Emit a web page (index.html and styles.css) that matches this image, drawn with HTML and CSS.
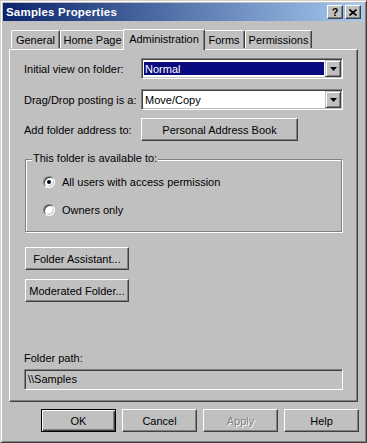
FILE: index.html
```html
<!DOCTYPE html>
<html lang="en">
<head>
  <meta charset="UTF-8">
  <title>Samples Properties</title>
  <link rel="stylesheet" href="styles.css">
</head>
<body>
  <div class="window">
    <div class="titlebar">
      <span class="title">Samples Properties</span>
      <div class="title-buttons">
        <span class="tbtn help">?</span>
        <span class="tbtn close">
          <svg width="8" height="7" viewBox="0 0 8 7"><path d="M0.5 0.5 L7.5 6.5 M7.5 0.5 L0.5 6.5" stroke="#000" stroke-width="1.6"/></svg>
        </span>
      </div>
    </div>

    <div class="tabs">
      <div class="tab tab-general">General</div>
      <div class="tab tab-home">Home Page</div>
      <div class="tab tab-admin active">Administration</div>
      <div class="tab tab-forms">Forms</div>
      <div class="tab tab-perm">Permissions</div>
    </div>

    <div class="panel">
      <div class="row row-view">
        <span class="row-label">Initial view on folder:</span>
        <div class="combo">
          <span class="combo-text highlight">Normal</span>
          <span class="drop"><svg width="7" height="4" viewBox="0 0 7 4"><polygon points="0,0 7,0 3.5,4" fill="#000"/></svg></span>
        </div>
      </div>

      <div class="row row-drag">
        <span class="row-label">Drag/Drop posting is a:</span>
        <div class="combo">
          <span class="combo-text">Move/Copy</span>
          <span class="drop"><svg width="7" height="4" viewBox="0 0 7 4"><polygon points="0,0 7,0 3.5,4" fill="#000"/></svg></span>
        </div>
      </div>

      <div class="row row-address">
        <span class="row-label">Add folder address to:</span>
        <button class="btn btn-address">Personal Address Book</button>
      </div>

      <div class="group">
        <span class="group-label">This folder is available to:</span>
        <div class="radio-row">
          <span class="radio checked"></span>
          <span>All users with access permission</span>
        </div>
        <div class="radio-row">
          <span class="radio"></span>
          <span>Owners only</span>
        </div>
      </div>

      <button class="btn btn-side btn-assistant">Folder Assistant...</button>
      <button class="btn btn-side btn-moderated">Moderated Folder...</button>

      <div class="path">
        <div class="path-label">Folder path:</div>
        <div class="path-field">\\Samples</div>
      </div>
    </div>

    <div class="buttons">
      <button class="btn btn-bottom default">OK</button>
      <button class="btn btn-bottom">Cancel</button>
      <button class="btn btn-bottom disabled">Apply</button>
      <button class="btn btn-bottom">Help</button>
    </div>
  </div>
</body>
</html>
```

FILE: styles.css
```css
body {
  margin: 0;
  background: #c0c0c0;
  font-family: "Liberation Sans", Arial, sans-serif;
  font-size: 11px;
  color: #000;
}

.window {
  width: 367px;
  height: 443px;
  box-sizing: border-box;
  padding: 2px;
  background: #c0c0c0;
  border: 1px solid;
  border-color: #d4d0c8 #404040 #404040 #d4d0c8;
  box-shadow: inset 1px 1px 0 #fff, inset -1px -1px 0 #808080;
}

.titlebar {
  height: 18px;
  display: flex;
  align-items: center;
  justify-content: space-between;
  padding-left: 3px;
  background: linear-gradient(to right, #0a246a, #a6caf0);
}

.title {
  color: #fff;
  font-weight: bold;
  font-size: 11.5px;
  letter-spacing: 0.2px;
}

.title-buttons {
  display: flex;
  gap: 2px;
  margin-right: 3px;
}

.tbtn {
  width: 16px;
  height: 14px;
  box-sizing: border-box;
  display: flex;
  align-items: center;
  justify-content: center;
  background: #c0c0c0;
  border: 1px solid;
  border-color: #fff #404040 #404040 #fff;
  box-shadow: inset -1px -1px 0 #808080;
  font-weight: bold;
  font-size: 11px;
  line-height: 1;
}

.tabs {
  display: flex;
  align-items: flex-end;
  height: 20px;
  margin-top: 8px;
  padding-left: 8px;
  position: relative;
  z-index: 1;
}

.tab {
  height: 18px;
  box-sizing: border-box;
  display: flex;
  align-items: center;
  justify-content: center;
  background: #c0c0c0;
  border-top: 1px solid #fff;
  border-left: 1px solid #fff;
  border-right: 1px solid #404040;
  border-radius: 2px 2px 0 0;
  box-shadow: inset -1px 0 0 #808080;
  margin-bottom: 1px;
  padding-top: 1px;
}

.tab-general { width: 49px; }
.tab-home { width: 65px; }
.tab-admin { width: 78px; }
.tab-forms { width: 42px; }
.tab-perm { width: 67px; }

.tab.active {
  width: 82px;
  height: 21px;
  margin: 0 -2px -1px;
  position: relative;
  z-index: 2;
  padding-top: 0;
  padding-bottom: 2px;
}

.panel {
  height: 353px;
  box-sizing: border-box;
  margin: 0 6px;
  padding: 8px 14px 11px;
  display: flex;
  flex-direction: column;
  border: 1px solid;
  border-color: #fff #404040 #404040 #fff;
  box-shadow: inset -1px -1px 0 #808080;
}

.row {
  display: flex;
  align-items: center;
}

.row-label {
  width: 117px;
  flex-shrink: 0;
}

.row-drag { margin-top: 10px; }
.row-address { margin-top: 8px; }

.combo {
  width: 202px;
  height: 21px;
  box-sizing: border-box;
  display: flex;
  padding: 2px;
  background: #fff;
  border: 1px solid;
  border-color: #808080 #fff #fff #808080;
  box-shadow: inset 1px 1px 0 #404040, inset -1px -1px 0 #c0c0c0;
}

.combo-text {
  flex: 1;
  display: flex;
  align-items: center;
  padding-left: 1px;
  margin: 1px 1px 1px 0;
}

.combo-text.highlight {
  background: #0a0a80;
  color: #fff;
}

.drop {
  width: 16px;
  height: 17px;
  margin: -1px -1px 0 0;
  box-sizing: border-box;
  display: flex;
  align-items: center;
  justify-content: center;
  background: #c0c0c0;
  border: 1px solid;
  border-color: #c0c0c0 #404040 #404040 #c0c0c0;
  box-shadow: inset 1px 1px 0 #fff, inset -1px -1px 0 #808080;
}

.btn {
  height: 23px;
  box-sizing: border-box;
  padding: 0;
  background: #c0c0c0;
  font-family: inherit;
  font-size: 11px;
  color: #000;
  border: 1px solid;
  border-color: #fff #404040 #404040 #fff;
  box-shadow: inset -1px -1px 0 #808080;
}

.btn-address { width: 157px; }

.group {
  position: relative;
  margin: 18px 1px 0;
  height: 73px;
  box-sizing: border-box;
  padding: 14px 0 0 17px;
  border: 1px solid #808080;
  box-shadow: inset 1px 1px 0 #fff, 1px 1px 0 #fff;
}

.group-label {
  position: absolute;
  top: -8px;
  left: 6px;
  padding: 0 1px;
  line-height: 13px;
  background: #c0c0c0;
}

.radio-row {
  display: flex;
  align-items: center;
  gap: 7px;
  height: 16px;
}

.radio-row + .radio-row { margin-top: 12px; }

.radio {
  width: 12px;
  height: 12px;
  box-sizing: border-box;
  border-radius: 50%;
  background: #fff;
  border: 1px solid;
  border-color: #808080 #fff #fff #808080;
  box-shadow: inset 1px 1px 0 #404040, inset -1px -1px 0 #c0c0c0;
  display: flex;
  align-items: center;
  justify-content: center;
}

.radio.checked::after {
  content: "";
  width: 4px;
  height: 4px;
  border-radius: 50%;
  background: #000;
}

.btn-side {
  width: 104px;
  margin-left: 1px;
}

.btn-assistant { margin-top: 15px; }
.btn-moderated { margin-top: 9px; }

.path { margin-top: auto; }

.path-label {
  line-height: 13px;
  margin-bottom: 4px;
}

.path-field {
  height: 21px;
  box-sizing: border-box;
  padding: 3px 0 0 3px;
  border: 1px solid;
  border-color: #808080 #fff #fff #808080;
  box-shadow: inset 1px 1px 0 #404040, inset -1px -1px 0 #c0c0c0;
}

.buttons {
  display: flex;
  justify-content: flex-end;
  gap: 6px;
  margin-top: 7px;
  padding-right: 5px;
}

.btn-bottom { width: 75px; }

.btn.default {
  border-color: #000;
  box-shadow: inset 1px 1px 0 #fff, inset -1px -1px 0 #404040, inset -2px -2px 0 #808080;
}

.btn.disabled {
  color: #808080;
  text-shadow: 1px 1px 0 #fff;
}
```
